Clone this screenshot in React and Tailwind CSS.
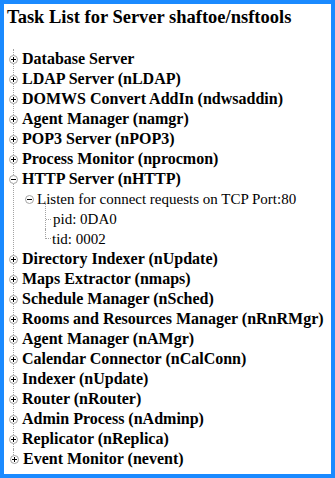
import React from "react";

const tasks = [
  "Database Server",
  "LDAP Server (nLDAP)",
  "DOMWS Convert AddIn (ndwsaddin)",
  "Agent Manager (namgr)",
  "POP3 Server (nPOP3)",
  "Process Monitor (nprocmon)",
  "HTTP Server (nHTTP)",
  "Directory Indexer (nUpdate)",
  "Maps Extractor (nmaps)",
  "Schedule Manager (nSched)",
  "Rooms and Resources Manager (nRnRMgr)",
  "Agent Manager (nAMgr)",
  "Calendar Connector (nCalConn)",
  "Indexer (nUpdate)",
  "Router (nRouter)",
  "Admin Process (nAdminp)",
  "Replicator (nReplica)",
  "Event Monitor (nevent)",
];

function Toggle({ open }) {
  return (
    <svg width="9" height="9" viewBox="0 0 9 9" className="shrink-0">
      <circle cx="4.5" cy="4.5" r="4" fill="#fff" stroke="#a3a3a3" strokeWidth="1" />
      <line x1="2" y1="4.5" x2="7" y2="4.5" stroke="#000" strokeWidth="1" />
      {!open && <line x1="4.5" y1="2" x2="4.5" y2="7" stroke="#000" strokeWidth="1" />}
    </svg>
  );
}

function TaskRow({ label, open }) {
  return (
    <div className="flex items-center h-[20px]">
      <span className="-ml-[5px] flex">
        <Toggle open={open} />
      </span>
      <span className="ml-[4px] font-bold text-[16px] whitespace-nowrap">{label}</span>
    </div>
  );
}

function HttpChildren() {
  return (
    <div>
      <div className="flex items-center h-[20px] pl-[11px]">
        <Toggle open />
        <span className="ml-[3px] text-[15px] whitespace-nowrap">
          Listen for connect requests on TCP Port:80
        </span>
      </div>
      <div className="ml-[31px]">
        <div className="-mt-[6px] pt-[6px] border-l border-dotted border-[#a3a3a3]">
          <div className="flex items-center h-[20px]">
            <span className="w-[5px] border-t border-dotted border-[#a3a3a3]" />
            <span className="ml-[2px] text-[15px]">pid: 0DA0</span>
          </div>
        </div>
        <div className="flex items-center h-[20px]">
          <span className="w-[6px] h-[10px] self-start border-l border-b border-dotted border-[#a3a3a3]" />
          <span className="ml-[1px] text-[15px]">tid: 0002</span>
        </div>
      </div>
    </div>
  );
}

export default function App() {
  const last = tasks[tasks.length - 1];
  const rest = tasks.slice(0, -1);

  return (
    <div className="w-[335px] h-[478px] bg-white border-4 border-[#1a8aff] pl-[3px] pt-[2px] text-black overflow-hidden font-['Liberation_Serif','Times_New_Roman',serif]">
      <h3 className="text-[18.5px] font-bold leading-[22px] whitespace-nowrap">
        Task List for Server shaftoe/nsftools
      </h3>

      <div className="mt-[21px] ml-[6px]">
        <ul className="border-l border-dotted border-[#a3a3a3]">
          {rest.map((t, i) => (
            <li key={i}>
              <TaskRow label={t} open={t === "HTTP Server (nHTTP)"} />
              {t === "HTTP Server (nHTTP)" && <HttpChildren />}
            </li>
          ))}
        </ul>
        <div className="flex h-[20px]">
          <span className="w-0 h-[10px] border-l border-dotted border-[#a3a3a3]" />
          <div className="flex items-center ml-[1px]">
            <span className="-ml-[5px] flex">
              <Toggle />
            </span>
            <span className="ml-[4px] font-bold text-[16px] whitespace-nowrap">{last}</span>
          </div>
        </div>
      </div>
    </div>
  );
}
